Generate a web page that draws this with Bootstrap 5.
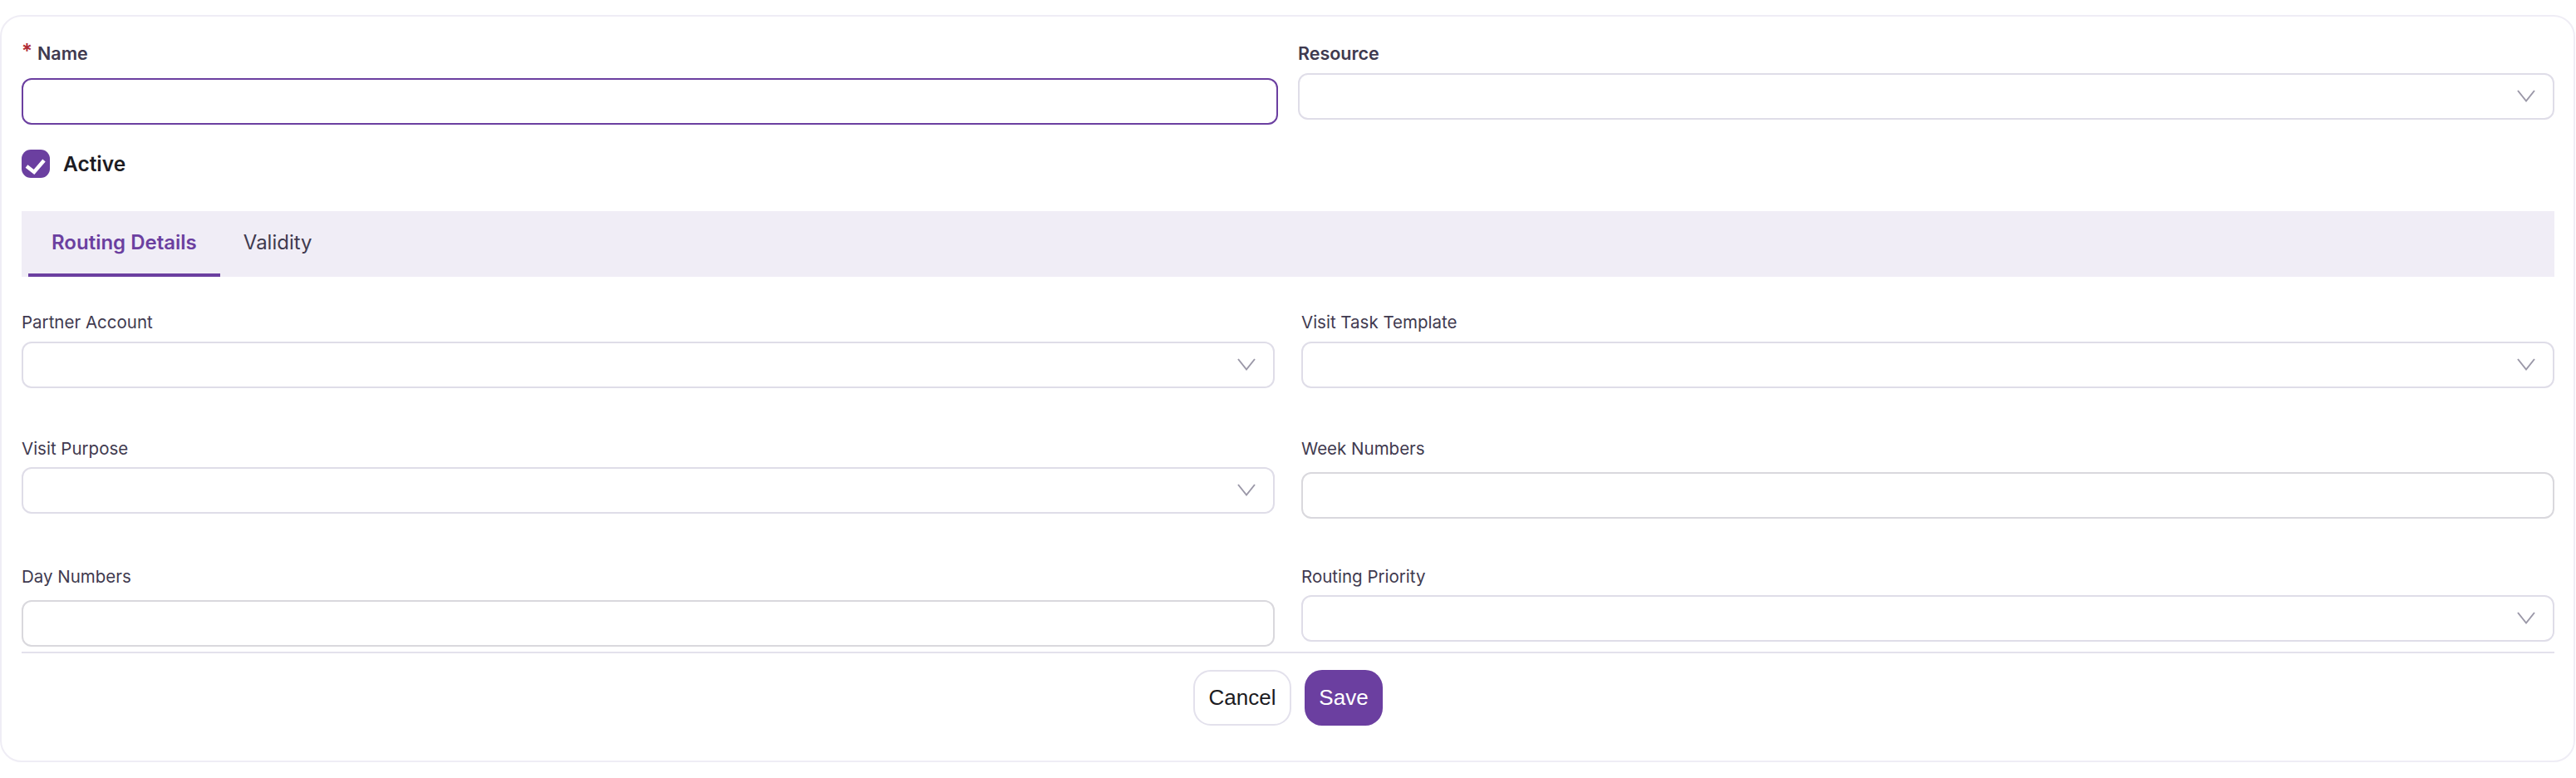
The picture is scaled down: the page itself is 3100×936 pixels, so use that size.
<!DOCTYPE html>
<html lang="en"><head><meta charset="utf-8"><title>Routing</title>
<link href="https://cdn.jsdelivr.net/npm/bootstrap@5.3.0/dist/css/bootstrap.min.css" rel="stylesheet">
<style>
body{background:#fff;font-family:Inter,"Liberation Sans",sans-serif;color:#3f3a4f;margin:0;}
.shell{margin:18px 1px 0 0;height:899px;border:2px solid #efedf5;border-radius:26px;padding:30px 23px 0 24px;}
.gap-top{column-gap:24px;}
.gap-low{column-gap:32px;}
.fcol{flex:1 1 0;min-width:0;}
.lab-b{font-size:21.5px;font-weight:600;line-height:28px;height:28px;display:flex;align-items:center;color:#3f3a4f;}
.lab-mb-a{margin-bottom:16px;}
.lab-mb-b{margin-bottom:10px;}
.lab{font-size:20.500px;font-weight:400;line-height:31px;height:28px;color:#3f3a4f;margin-bottom:10px;}
.lab-first{margin-bottom:11px;}
.star{color:#b02a37;font-size:24px;width:19px;line-height:1;position:relative;top:-2px;}
.inbox{height:56px;width:100%;border:2px solid #d9d8dd;border-radius:12px;background:#fff;display:block;margin-top:16px;}
.inbox-on{border-color:#6b3fa0;margin-top:0;}
.selbox{height:56px;border:2px solid #dfdde8;border-radius:12px;background:#fff;padding-right:21px;}
.chev{width:22px;height:16px;}
.chk{width:34px;height:34px;border-radius:11px;background:#6b3fa0;display:block;}
.act{font-size:24.500px;line-height:34px;font-weight:600;color:#1c1b22;margin-left:16px;}
.active-row{margin-top:30px;}
.tabbar{background:#f0edf6;height:79px;margin-top:40px;padding-left:8px;}
.tabi{font-size:24px;height:79px;padding:0 28px;display:flex;align-items:center;color:#3f3a4f;border-bottom:4px solid transparent;}
.tabi-on{color:#6b3fa0;font-weight:600;border-bottom-color:#6b3fa0;}
.row-a{height:152px;margin-top:39px;}
.row-b{height:154px;}
.foot{border-top:2px solid #e3e1ec;margin-top:6px;padding-top:20px;gap:16px;}
.bt{height:67px;border-radius:21px;font-family:"Liberation Sans",sans-serif;font-size:26px;padding:0;}
.bt-c{width:118px;border:2px solid #e3e1ec;background:#fff;color:#1c1b22;}
.bt-s{width:94px;border:0;background:#6b3fa0;color:#fff;}
</style></head><body>
<div class="shell">
 <div class="d-flex gap-top">
  <div class="fcol"><div class="lab-b lab-mb-a"><span class="star">*</span>Name</div><input class="inbox inbox-on" aria-label="Name"></div>
  <div class="fcol"><div class="lab-b lab-mb-b">Resource</div><div class="selbox d-flex align-items-center justify-content-end"><svg class="chev" viewBox="0 0 22 16"><path d="M1 1l10 12.500L21 1" fill="none" stroke="#9b98a8" stroke-width="2"/></svg></div></div>
 </div>
 <div class="d-flex align-items-center active-row"><svg class="chk" viewBox="0 0 34 34"><path d="M6 20l9 7L27 13" fill="none" stroke="#fff" stroke-width="4.500"/></svg><span class="act">Active</span></div>
 <div class="tabbar d-flex"><div class="tabi tabi-on">Routing Details</div><div class="tabi">Validity</div></div>
 <div class="d-flex gap-low row-a">
  <div class="fcol"><div class="lab lab-first">Partner Account</div><div class="selbox d-flex align-items-center justify-content-end"><svg class="chev" viewBox="0 0 22 16"><path d="M1 1l10 12.500L21 1" fill="none" stroke="#9b98a8" stroke-width="2"/></svg></div></div>
  <div class="fcol"><div class="lab lab-first">Visit Task Template</div><div class="selbox d-flex align-items-center justify-content-end"><svg class="chev" viewBox="0 0 22 16"><path d="M1 1l10 12.500L21 1" fill="none" stroke="#9b98a8" stroke-width="2"/></svg></div></div>
 </div>
 <div class="d-flex gap-low row-b">
  <div class="fcol"><div class="lab">Visit Purpose</div><div class="selbox d-flex align-items-center justify-content-end"><svg class="chev" viewBox="0 0 22 16"><path d="M1 1l10 12.500L21 1" fill="none" stroke="#9b98a8" stroke-width="2"/></svg></div></div>
  <div class="fcol"><div class="lab">Week Numbers</div><input class="inbox" aria-label="Week Numbers"></div>
 </div>
 <div class="d-flex gap-low">
  <div class="fcol"><div class="lab">Day Numbers</div><input class="inbox" aria-label="Day Numbers"></div>
  <div class="fcol"><div class="lab">Routing Priority</div><div class="selbox d-flex align-items-center justify-content-end"><svg class="chev" viewBox="0 0 22 16"><path d="M1 1l10 12.500L21 1" fill="none" stroke="#9b98a8" stroke-width="2"/></svg></div></div>
 </div>
 <div class="foot d-flex justify-content-center"><button class="bt bt-c">Cancel</button><button class="bt bt-s">Save</button></div>
</div>
</body></html>
